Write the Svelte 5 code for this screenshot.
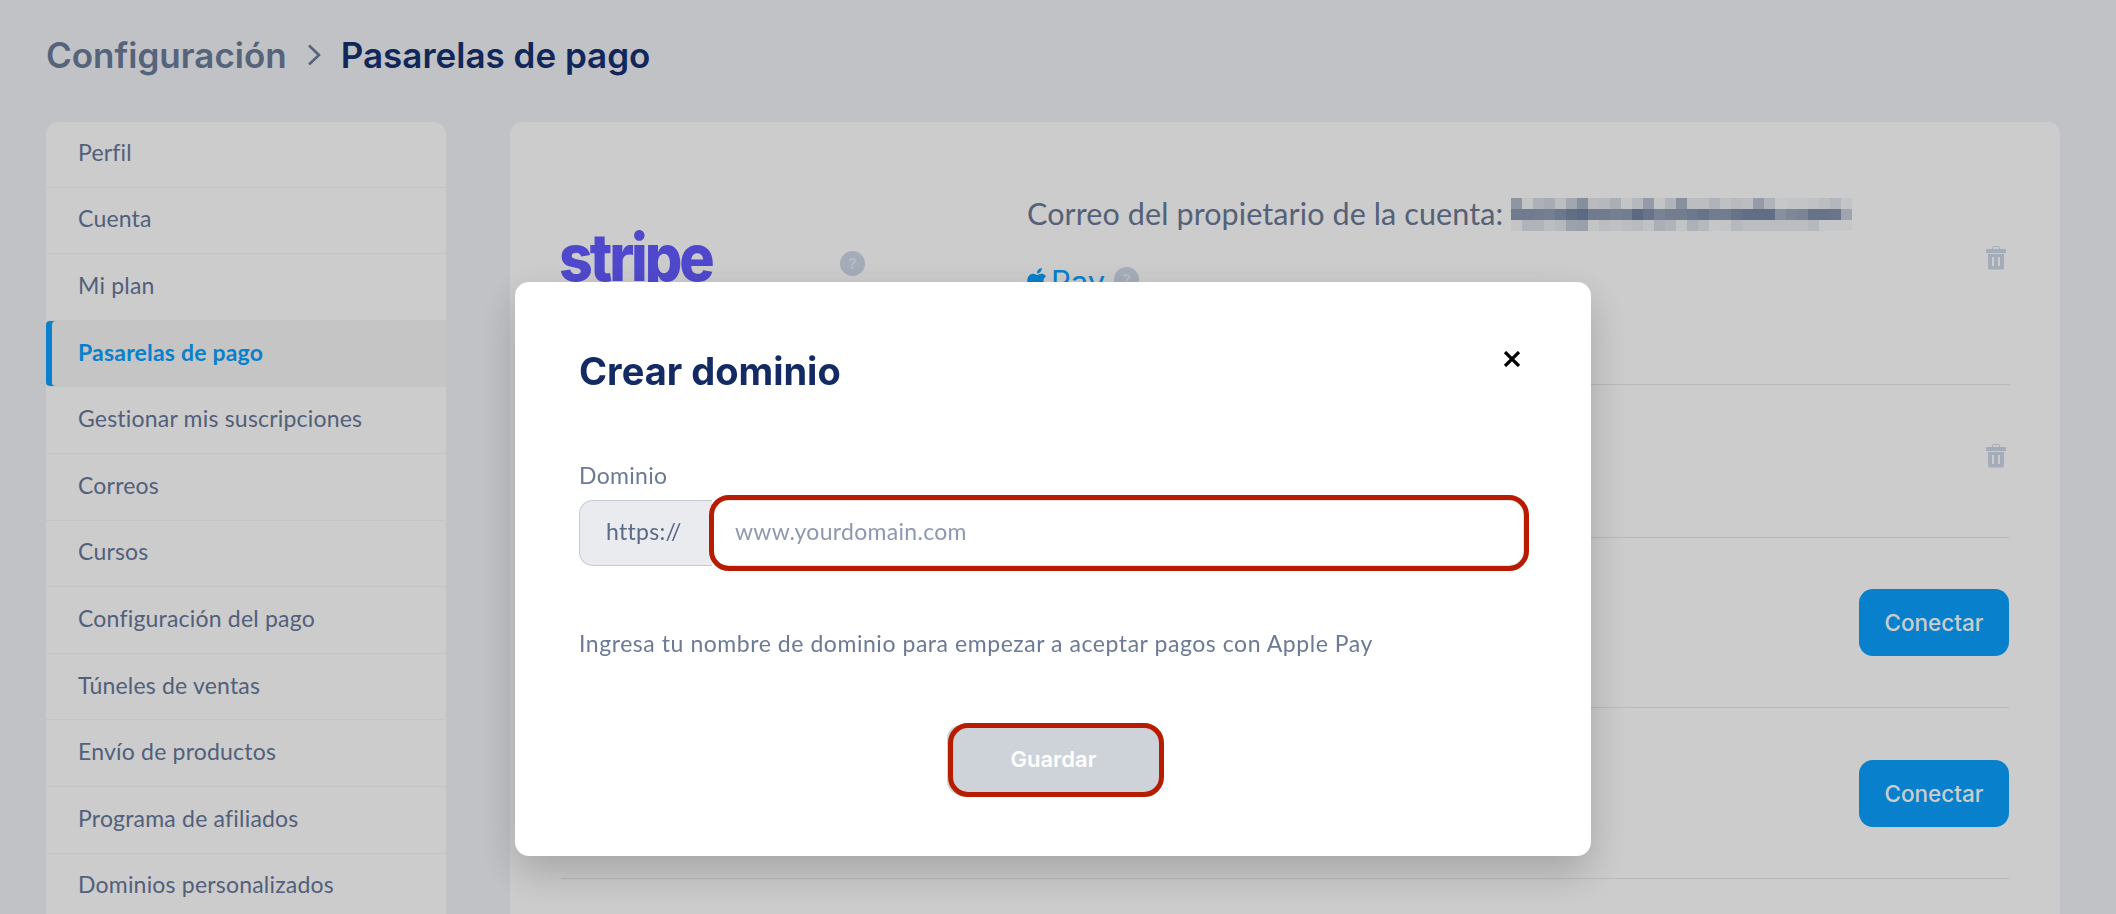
<svelte:options runes={true} />

<script>
const menu = [
    'Perfil',
    'Cuenta',
    'Mi plan',
    'Pasarelas de pago',
    'Gestionar mis suscripciones',
    'Correos',
    'Cursos',
    'Configuración del pago',
    'Túneles de ventas',
    'Envío de productos',
    'Programa de afiliados',
    'Dominios personalizados'
];

// pixelated e-mail: how dark each block of the mosaic is
const mosaic = [
    [.55,.08,.28,.33,.15,.38,.62,.18,.2,.3,.08,.2,.5,.08,.25,.6,.15,.15,.25,.12,.18,.15,.5,.25,.05,.08,.08,.1,.15,.22,.08],
    [.82,.82,.8,.78,.85,.95,1,.82,.82,.78,.8,1,.9,.75,.8,.8,.85,.9,.8,.8,.9,.95,.95,.95,.6,.7,.72,.9,.9,.88,.4],
    [.08,.25,.25,.15,.2,.42,.45,.08,.15,.12,.15,.18,.1,.3,.25,.08,.28,.2,.05,.08,.2,.15,.15,.15,.15,.15,.15,.2,.05,.05,.05]
];
</script>

{#snippet help()}
    <span class="help">?</span>
{/snippet}

{#snippet trash()}
    <svg class="trash" width="20" height="24" viewBox="0 0 20 24">
        <path d="M6.5 3V1.6Q6.5.5 7.6.5h4.8q1.1 0 1.1 1.1V3" fill="none" stroke="#ced8e8" />
        <rect y="3" width="20" height="4" rx=".6" fill="#ced8e8" />
        <path fill-rule="evenodd" fill="#ced8e8" d="M2 8h16v14q0 1.5-1.5 1.5h-13Q2 23.500 2 22zM6 11v9h2v-9zM12 11v9h2v-9z" />
    </svg>
{/snippet}

<div class="page">
    <header class="crumbs">
        <span class="parent">Configuración</span>
        <svg width="14" height="22" viewBox="0 0 14 22"><path d="M2 1.500 12 11 2 20.500" fill="none" stroke="#6b7c9a" stroke-width="2.600" /></svg>
        <span class="current">Pasarelas de pago</span>
    </header>

    <div class="columns">
        <nav class="sidebar">
            {#each menu as item, i}
                <div class="item" class:active={i === 3}>{item}</div>
            {/each}
        </nav>

        <main class="card">
            <section class="row first">
                <div class="stripe">stripe</div>
                <div class="badge-cell">{@render help()}</div>
                <div class="details">
                    <div class="owner">
                        <span>Correo del propietario de la cuenta:</span>
                        <div class="mosaic">
                            <div class="mosaic-top"></div>
                            {#each mosaic as line}
                                <div class="mosaic-line">
                                    {#each line as v}
                                        <i style="opacity: {v}"></i>
                                    {/each}
                                </div>
                            {/each}
                        </div>
                    </div>
                    <div class="pay">
                        <svg width="24" height="26" viewBox="0 0 24 24"><path fill="#0aa0ff" d="M12.152 6.896c-.948 0-2.415-1.078-3.960-1.040-2.040.027-3.910 1.183-4.961 3.014-2.117 3.675-.546 9.103 1.519 12.090 1.013 1.454 2.208 3.090 3.792 3.039 1.520-.065 2.090-.987 3.935-.987 1.831 0 2.350.987 3.960.948 1.637-.026 2.676-1.480 3.676-2.948 1.156-1.688 1.636-3.325 1.662-3.415-.039-.013-3.182-1.221-3.220-4.857-.026-3.040 2.480-4.494 2.597-4.559-1.429-2.090-3.623-2.324-4.390-2.376-2-.156-3.675 1.090-4.610 1.090zM15.530 3.830c.843-1.012 1.400-2.427 1.245-3.830-1.207.052-2.662.805-3.532 1.818-.780.896-1.454 2.338-1.273 3.714 1.338.104 2.715-.688 3.559-1.701" /></svg>
                        <span class="pay-text">Pay</span>
                        {@render help()}
                    </div>
                </div>
                <div class="action top">{@render trash()}</div>
            </section>

            <section class="row second">
                <div class="action">{@render trash()}</div>
            </section>

            <section class="row third">
                <button class="connect">Conectar</button>
            </section>

            <section class="row fourth">
                <button class="connect">Conectar</button>
            </section>
        </main>
    </div>
</div>

<div class="overlay">
    <div class="modal">
        <div class="modal-head">
            <h2>Crear dominio</h2>
            <svg class="close" width="18" height="16" viewBox="0 0 18 16"><path d="M2 1 16 15M16 1 2 15" stroke="#000" stroke-width="3.200" /></svg>
        </div>

        <div class="label">Dominio</div>
        <div class="field">
            <span class="addon">https://</span>
            <div class="input-wrap">
                <input placeholder="www.yourdomain.com" />
                <span class="mark input-mark"></span>
            </div>
        </div>

        <p class="hint">Ingresa tu nombre de dominio para empezar a aceptar pagos con Apple Pay</p>

        <div class="footer">
            <div class="save-wrap">
                <button class="save">Guardar</button>
                <span class="mark save-mark"></span>
            </div>
        </div>
    </div>
</div>

<style>
:global(body) {
    background: #f1f3f7;
    overflow: hidden;
    height: 914px;
}
.page {
    height: 914px;
    overflow: hidden;
    padding: 0 56px 0 46px;
    font-family: Lato, "Noto Sans", sans-serif;
    font-size: 23px;
    letter-spacing: .2px;
    color: #67789a;
}
.crumbs {
    height: 122px;
    padding-bottom: 13px;
    box-sizing: border-box;
    display: flex;
    align-items: center;
    gap: 20px;
    font-family: Inter, sans-serif;
    font-size: 35px;
    font-weight: 600;
    letter-spacing: 0;
}
.parent {
    color: #6b7c9a;
}
.current {
    color: #163171;
}
.columns {
    display: flex;
    gap: 64px;
}
.sidebar {
    width: 400px;
    flex: none;
    background: #fff;
    border-radius: 12px 12px 0 0;
    height: 800px;
}
.item {
    height: 66.6px;
    box-sizing: border-box;
    padding: 0 0 4px 32px;
    display: flex;
    align-items: center;
    border-bottom: 1px solid #f6f6f6;
}
.item:first-child {
    height: 65.6px;
}
.item.active {
    background: #f7f7f7;
    color: #0aa0ff;
    font-weight: 700;
    box-shadow: inset 6px 0 0 #0aa0ff;
    border-radius: 4px 0 0 4px;
}
.card {
    flex: 1;
    background: #fff;
    border-radius: 12px 12px 0 0;
    height: 800px;
    padding: 0 51px;
}
.row {
    display: flex;
    justify-content: flex-end;
    box-sizing: border-box;
    border-bottom: 1px solid #e7e7e7;
}
.row.first {
    height: 263px;
    justify-content: flex-start;
}
.row.second {
    height: 153px;
    padding-top: 59px;
}
.row.third {
    height: 170px;
    padding-top: 51px;
}
.row.fourth {
    height: 171px;
    padding-top: 52px;
}
.stripe {
    width: 280px;
    flex: none;
    box-sizing: border-box;
    margin: 95px 0 0 -2px;
    font-family: Inter, sans-serif;
    font-weight: 800;
    font-size: 66px;
    letter-spacing: -3.5px;
    line-height: 80px;
    color: #635bff;
    transform: scaleX(.895);
    transform-origin: left;
}
.badge-cell {
    width: 188px;
    flex: none;
    padding: 124px 0 0 1px;
    box-sizing: border-box;
}
.help {
    display: inline-block;
    width: 25px;
    height: 25px;
    border-radius: 50%;
    background: #ced8e8;
    color: #e6ecf5;
    font-family: Inter, sans-serif;
    font-size: 15px;
    font-weight: 700;
    line-height: 25px;
    letter-spacing: 0;
    text-align: center;
}
.details {
    flex: 1;
    padding-top: 72px;
}
.owner {
    display: flex;
    align-items: center;
    gap: 8px;
    height: 37px;
    font-size: 30.5px;
    letter-spacing: .1px;
    color: #6a7a96;
}
.mosaic {
    width: 342px;
    flex: none;
}
.mosaic-top {
    height: 4px;
    width: 320px;
    background: #fff;
    opacity: .3;
}
.mosaic-line {
    display: flex;
    height: 11px;
}
.mosaic-line i {
    width: 11px;
    background: #7384a3;
}
.pay {
    display: flex;
    align-items: flex-start;
    margin: 36px 0 0 -2px;
}
.pay svg {
    margin-right: 2px;
}
.pay-text {
    font-family: Inter, sans-serif;
    font-size: 31px;
    line-height: 40px;
    letter-spacing: 0;
    color: #0aa0ff;
    margin-right: 9px;
    margin-top: -5px;
}
.action {
    margin-right: 3px;
}
.action.top {
    padding-top: 124px;
}
.connect {
    width: 150px;
    height: 67px;
    border: none;
    border-radius: 14px;
    background: #0aa0ff;
    color: #fff;
    font-family: Inter, sans-serif;
    font-size: 22.5px;
    font-weight: 500;
}
.overlay {
    position: fixed;
    inset: 0;
    background: rgba(0, 0, 0, .2);
    padding: 282px 0 0 515px;
}
.modal {
    width: 1076px;
    height: 574px;
    box-sizing: border-box;
    padding: 67px 67px 0 64px;
    background: #fff;
    border-radius: 14px;
    box-shadow: 0 16px 40px rgba(0, 0, 0, .2);
    font-family: Lato, "Noto Sans", sans-serif;
    font-size: 23px;
    letter-spacing: .3px;
    color: #6b7a95;
}
.modal-head {
    display: flex;
    justify-content: space-between;
    align-items: flex-start;
    height: 110px;
}
h2 {
    margin: 0;
    font-family: Inter, sans-serif;
    font-size: 38px;
    font-weight: 700;
    line-height: 44px;
    letter-spacing: 0;
    color: #132a63;
}
.close {
    margin: 2px 3px 0 0;
}
.label {
    line-height: 30px;
    height: 41px;
    padding-top: 1px;
    box-sizing: border-box;
}
.field {
    display: flex;
    height: 66px;
}
.addon {
    width: 133px;
    box-sizing: border-box;
    padding: 0 0 5px 26px;
    display: flex;
    align-items: center;
    background: #e9ebef;
    border: 1px solid #c3ccd5;
    border-right: none;
    border-radius: 14px 0 0 14px;
    color: #5b6a85;
}
.input-wrap {
    flex: 1;
    position: relative;
}
input {
    width: 100%;
    height: 100%;
    box-sizing: border-box;
    padding: 0 22px 5px;
    border: 1px solid #dde2e8;
    border-radius: 14px;
    background: #fff;
    font: inherit;
    letter-spacing: .3px;
    outline: none;
}
input::placeholder {
    color: #8d99ae;
    opacity: 1;
}
.mark {
    position: absolute;
    box-sizing: border-box;
    border: 5px solid #b71c00;
    pointer-events: none;
}
.input-mark {
    inset: -5px -5px -5px -3px;
    border-radius: 20px;
}
.hint {
    margin: 62px 0 0;
    line-height: 30px;
    letter-spacing: .55px;
}
.footer {
    display: flex;
    justify-content: center;
    margin-top: 67px;
    padding-left: 4px;
}
.save-wrap {
    position: relative;
}
.save {
    display: block;
    width: 214px;
    height: 70px;
    padding: 0 0 2px;
    border: none;
    border-radius: 14px;
    background: #cdd3d9;
    color: #fff;
    font-family: Inter, sans-serif;
    font-size: 22px;
    font-weight: 600;
}
.save-mark {
    inset: -2px -3px -2px 1px;
    border-radius: 20px;
}
</style>
